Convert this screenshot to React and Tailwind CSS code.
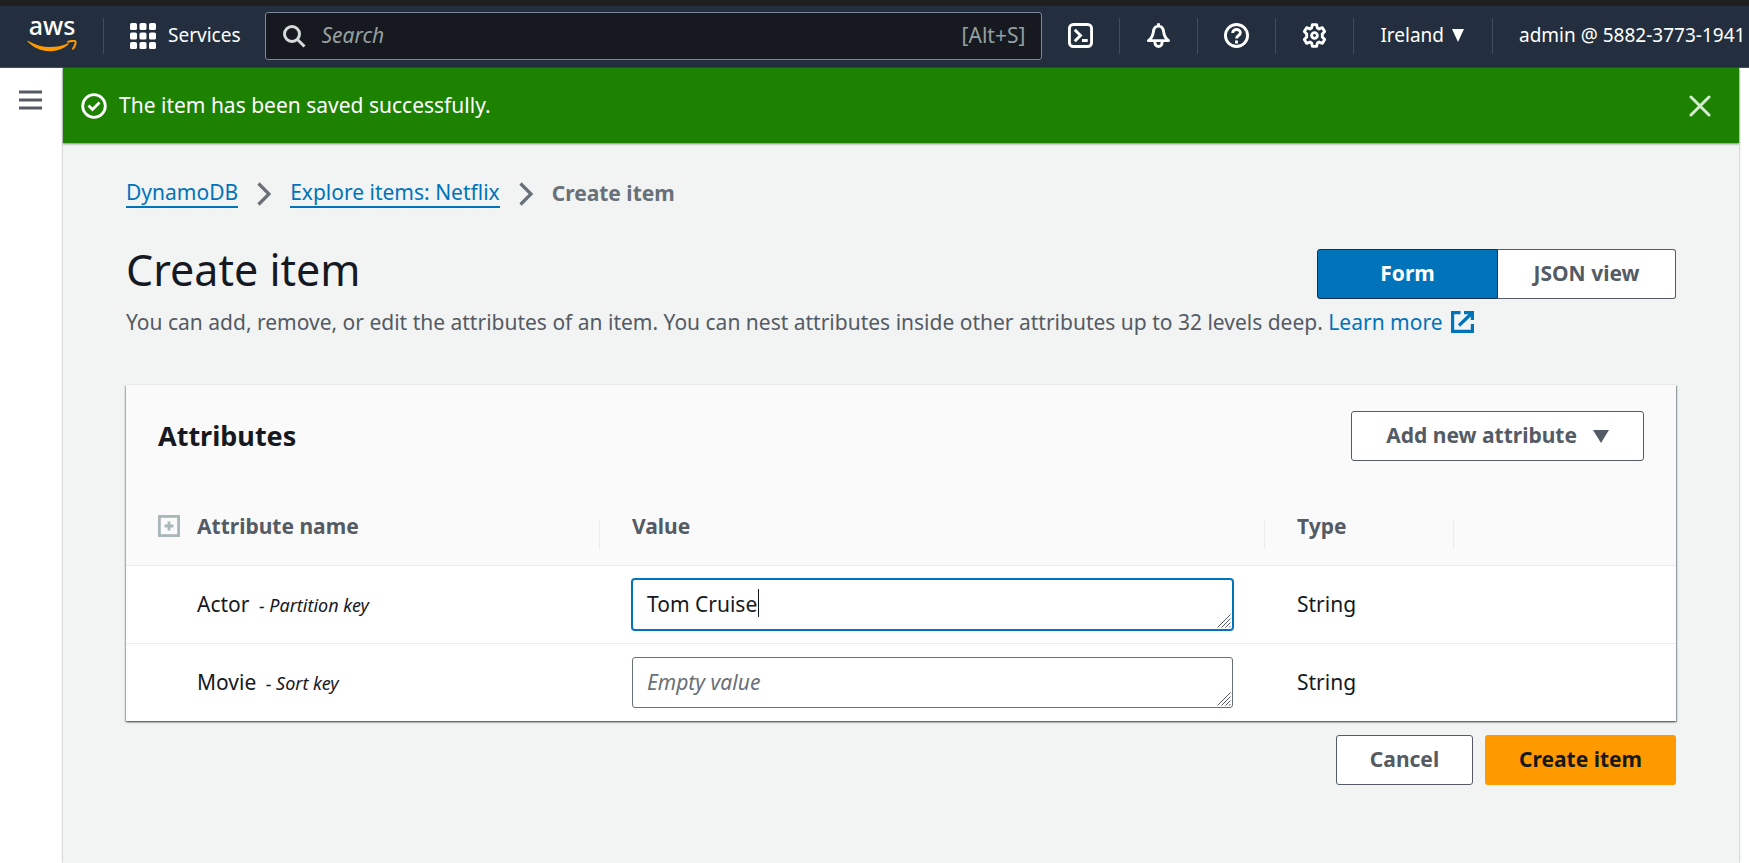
import React from "react";

const outlineButton =
  "flex h-[50px] items-center justify-center rounded-[3px] border border-[#545b64] bg-white text-[21px] font-bold text-[#545b64]";

function AwsLogo() {
  return (
    <a href="#home" aria-label="AWS home" className="flex w-[50px] shrink-0 flex-col items-center text-white">
      <span className="mb-[9px] text-[25px] font-medium leading-3">aws</span>
      <svg viewBox="0 0 50 12" className="h-3 w-[50px]" fill="none" stroke="#ff9900" aria-hidden="true">
        <path d="M.4 1.600C.1 1 .6.500 1.300.900 8 4.800 15 7 23 7c6.500 0 12.500-1.300 17.500-3.600 1-.4 1.700.7.8 1.300C36.500 8.500 30 11.300 22.500 11.300 14 11.300 6 7.500.4 1.600Z" fill="#ff9900" stroke="none" />
        <path d="M41 1.900c3-1.200 6.800-1.300 7.400-.5.600.9-.3 4.600-2.300 7.200" strokeWidth="2" strokeLinecap="round" />
      </svg>
    </a>
  );
}

function Divider() {
  return <span className="h-9 w-px shrink-0 bg-[#414d5c]" />;
}

function GridIcon() {
  return (
    <svg viewBox="0 0 26 26" className="size-[26px]" fill="currentColor" aria-hidden="true">
      {[0, 9.500, 19].map((y) =>
        [0, 9.500, 19].map((x) => <rect key={`${x}-${y}`} x={x} y={y} width="7" height="7" rx="1.600" />)
      )}
    </svg>
  );
}

function ToolIcon({ label, children }) {
  return (
    <button type="button" aria-label={label} className="flex shrink-0 items-center justify-center text-white">
      <svg viewBox="0 0 26 26" className="size-[25px]" fill="none" stroke="currentColor" strokeWidth="3" aria-hidden="true">
        {children}
      </svg>
    </button>
  );
}

function TopBar() {
  return (
    <nav className="flex h-[62px] items-center overflow-hidden border-b border-[#414d5c] bg-[#232f3e] pb-[2px] pl-[27px] text-[20px] text-white">
      <AwsLogo />
      <div className="ml-[26px] flex shrink-0">
        <Divider />
      </div>
      <button type="button" className="ml-[26px] flex shrink-0 items-center gap-3 text-[19px]">
        <GridIcon />
        Services
      </button>
      <label className="ml-6 flex h-12 min-w-0 flex-1 items-center rounded-[3px] border border-[#7d8998] bg-[#16191f] px-4">
        <svg viewBox="0 0 24 24" className="size-6 shrink-0" fill="none" stroke="#d5dbdb" strokeWidth="3" aria-hidden="true">
          <circle cx="10" cy="10" r="7.500" />
          <path d="m15.500 15.500 7 7" />
        </svg>
        <input
          type="search"
          aria-label="Search"
          placeholder="Search"
          className="ml-4 min-w-0 flex-1 bg-transparent text-[21px] italic outline-none placeholder:text-[#95a0a1]"
        />
        <span className="shrink-0 text-[21px] text-[#95a0a1]">[Alt+S]</span>
      </label>
      <div className="ml-[26px] flex shrink-0 items-center gap-[26px]">
        <ToolIcon label="CloudShell">
          <rect x="1.500" y="1.500" width="23" height="23" rx="4" />
          <path d="m7 7 6 6-6 6M14.500 18.200h6" />
        </ToolIcon>
        <Divider />
        <ToolIcon label="Notifications">
          <path strokeLinejoin="round" d="M13 .3v3.200M13 3.200c-3.500 0-4.900 2.300-5.300 5.800-.5 4.300-1.600 6.800-5.200 9.300h21c-3.600-2.500-4.700-5-5.200-9.300-.4-3.500-1.800-5.800-5.300-5.800ZM9.300 18.500v2c0 5.300 7.400 5.300 7.400 0v-2" />
        </ToolIcon>
        <Divider />
        <ToolIcon label="Support">
          <circle cx="13" cy="13" r="11.500" />
          <path d="M9 10.500c0-5 8-5 8-.3 0 3-4 2.500-4 6M13 18.200v3" />
        </ToolIcon>
        <Divider />
        <ToolIcon label="Settings">
          <path
            strokeLinejoin="round"
            d="M10.800 1.700h4.400l.8 3.500 1.700 1 3.500-1.300 2.400 3.900-2.500 2.700v3l2.500 2.700-2.400 3.900-3.500-1.300-1.700 1-.8 3.500h-4.400l-.8-3.500-1.700-1-3.500 1.300-2.400-3.900 2.500-2.700v-3L2.400 8.800l2.400-3.900 3.500 1.300 1.700-1Z"
          />
          <circle cx="13" cy="13" r="3" />
        </ToolIcon>
        <Divider />
        <button type="button" className="flex items-center gap-2 pr-[2px] text-[19px]">
          Ireland
          <svg viewBox="0 0 12 13" className="h-[13px] w-3" fill="currentColor" aria-hidden="true">
            <path d="M0 0h12L6 13Z" />
          </svg>
        </button>
        <Divider />
        <button type="button" className="w-[230px] whitespace-nowrap text-left text-[19px]">
          admin @ 5882-3773-1941
        </button>
      </div>
    </nav>
  );
}

function Banner() {
  return (
    <div role="status" className="flex h-[75px] items-center bg-[#1d8102] pl-[18px] pr-7 text-[21px] text-white shadow-[0_1px_2px_rgba(0,28,36,0.5)]">
      <svg viewBox="0 0 26 26" className="size-[26px] shrink-0" fill="none" stroke="currentColor" strokeWidth="2.800" aria-hidden="true">
        <circle cx="13" cy="13" r="11.300" />
        <path d="m7.500 12.500 4 4 7-7" />
      </svg>
      <p className="ml-3 flex-1">The item has been saved successfully.</p>
      <button type="button" aria-label="Dismiss" className="text-[#d5ecd0]">
        <svg viewBox="0 0 22 22" className="size-[22px]" fill="none" stroke="currentColor" strokeWidth="3" strokeLinecap="round" aria-hidden="true">
          <path d="m2 2 18 18M20 2 2 20" />
        </svg>
      </button>
    </div>
  );
}

function Chevron() {
  return (
    <svg viewBox="0 0 14 24" className="h-6 w-[14px] shrink-0" fill="none" stroke="#687078" strokeWidth="3.200" aria-hidden="true">
      <path d="m1.500 1.500 10.500 10.500-10.500 10.500" />
    </svg>
  );
}

function Breadcrumbs() {
  const link = "border-b-2 border-[#0073bb] text-[#0073bb]";
  return (
    <nav aria-label="Breadcrumbs" className="flex items-center gap-[19px] text-[21px] leading-[27px]">
      <a href="#dynamodb" className={link}>DynamoDB</a>
      <Chevron />
      <a href="#explore" className={link}>Explore items: Netflix</a>
      <Chevron />
      <span className="font-bold text-[#687078]">Create item</span>
    </nav>
  );
}

function ValueField({ id, value, focused }) {
  return (
    <div className="relative">
      <textarea
        id={id}
        rows={1}
        defaultValue={value}
        placeholder="Empty value"
        className={
          "block h-[51px] w-full resize-none overflow-hidden rounded-[3px] bg-white px-[14px] py-[9px] text-[21px] leading-[30px] text-[#16191f] outline-none placeholder:italic placeholder:text-[#687078] " +
          (focused ? "border border-[#0073bb] ring-1 ring-[#0073bb]" : "border border-[#687078]")
        }
      />
      {focused && <span className="absolute left-[126px] top-[10px] h-7 w-px bg-[#16191f]" />}
      <svg viewBox="0 0 14 14" className="pointer-events-none absolute bottom-[2px] right-[2px] size-[14px]" stroke="#545b64" strokeWidth="1" fill="none" aria-hidden="true">
        <path d="M.5 13.500 13.500.5M4.500 13.500l9-9M8.500 13.500l5-5M12 13.500l1.500-1.500" />
      </svg>
    </div>
  );
}

function HeaderCell({ children, divider = true }) {
  return (
    <th scope="col" className="p-0 pb-4 pl-8 text-left font-bold">
      <div className="flex items-end justify-between">
        <span className="flex items-center gap-[17px] pb-[9px] leading-7">{children}</span>
        {divider && <span className="h-[30px] w-px bg-[#eaeded]" />}
      </div>
    </th>
  );
}

const rows = [
  { name: "Actor", role: "Partition key", value: "Tom Cruise", focused: true },
  { name: "Movie", role: "Sort key", value: "", focused: false },
];

function AttributesCard() {
  return (
    <section className="mt-[49px] bg-white shadow-[0_1px_2px_rgba(0,28,36,0.6),1px_1px_1px_rgba(0,28,36,0.25),-1px_1px_1px_rgba(0,28,36,0.15)]">
      <div className="flex items-center justify-between bg-[#fafafa] px-8 pb-[51px] pt-[26px]">
        <h2 className="text-[27px] font-bold leading-8 text-[#16191f]">Attributes</h2>
        <button type="button" className={outlineButton + " gap-4 px-[34px]"}>
          Add new attribute
          <svg viewBox="0 0 16 13" className="h-[13px] w-4" fill="currentColor" aria-hidden="true">
            <path d="M0 0h16L8 13Z" />
          </svg>
        </button>
      </div>
      <table className="w-full table-fixed text-[21px]">
        <colgroup>
          <col className="w-[474px]" />
          <col />
          <col className="w-[189px]" />
          <col className="w-[222px]" />
        </colgroup>
        <thead className="border-b border-[#eaeded] bg-[#fafafa] text-[#545b64]">
          <tr>
            <HeaderCell>
              <svg viewBox="0 0 22 22" className="size-[22px]" fill="none" stroke="#aab7b8" strokeWidth="2.800" aria-hidden="true">
                <rect x="1.400" y="1.400" width="19.200" height="19.200" />
                <path d="M11 6.500v9M6.500 11h9" />
              </svg>
              Attribute name
            </HeaderCell>
            <HeaderCell>Value</HeaderCell>
            <HeaderCell>Type</HeaderCell>
            <HeaderCell divider={false} />
          </tr>
        </thead>
        <tbody className="text-[#16191f]">
          {rows.map((row) => (
            <tr key={row.name} className="border-b border-[#eaeded] last:border-b-0">
              <td className="py-3 pl-[71px]">
                <label htmlFor={row.name.toLowerCase()}>
                  {row.name} <em className="ml-1 text-[18px]">- {row.role}</em>
                </label>
              </td>
              <td className="px-8 py-[13px]">
                <ValueField id={row.name.toLowerCase()} value={row.value} focused={row.focused} />
              </td>
              <td className="pl-8">String</td>
              <td />
            </tr>
          ))}
        </tbody>
      </table>
    </section>
  );
}

export default function App() {
  return (
    <div className="flex min-h-screen flex-col bg-white font-['Noto_Sans','Open_Sans',sans-serif] text-[#16191f]">
      <div className="h-[6px] bg-[#1f1f1f]" />
      <TopBar />
      <div className="flex flex-1">
        <aside className="w-[63px] shrink-0 pl-[19px] pt-[22px]">
          <button type="button" aria-label="Open navigation" className="block text-[#545b64]">
            <svg viewBox="0 0 23 20" className="h-5 w-[23px]" stroke="currentColor" strokeWidth="3" aria-hidden="true">
              <path d="M0 2h23M0 10h23M0 18h23" />
            </svg>
          </button>
        </aside>
        <div className="mr-[10px] min-w-0 flex-1 bg-[#f2f3f3] shadow-[0_0_2px_rgba(0,28,36,0.5)]">
          <Banner />
          <main className="px-[63px] pt-9">
            <Breadcrumbs />
            <div className="mt-[41px] flex items-start justify-between">
              <h1 className="text-[43px] leading-[42px]">Create item</h1>
              <div className="flex">
                <button type="button" aria-pressed="true" className="h-[50px] w-[181px] rounded-l-[3px] border border-[#16324a] bg-[#0073bb] text-[21px] font-bold text-white">
                  Form
                </button>
                <button type="button" aria-pressed="false" className="h-[50px] w-[178px] rounded-r-[3px] border border-l-0 border-[#545b64] bg-white text-[21px] font-bold text-[#545b64]">
                  JSON view
                </button>
              </div>
            </div>
            <p className="mt-[9px] text-[21px] leading-7 text-[#545b64]">
              You can add, remove, or edit the attributes of an item. You can nest attributes inside other attributes up to 32 levels deep.{" "}
              <a href="#learn" className="inline-flex items-center gap-2 text-[#0073bb]">
                Learn more
                <svg viewBox="0 0 23 22" className="h-[22px] w-[23px]" fill="none" stroke="currentColor" strokeWidth="3.200" aria-hidden="true">
                  <path d="M9.500 1.600H1.600v18.800h19.800V13M13 1.600h8.400V9M21 2 8 14.500" />
                </svg>
              </a>
            </p>
            <AttributesCard />
            <div className="flex justify-end gap-3 pt-[14px]">
              <button type="button" className={outlineButton + " w-[137px]"}>Cancel</button>
              <button type="button" className="h-[50px] w-[191px] rounded-[3px] bg-[#ff9900] text-[21px] font-bold text-[#16191f]">
                Create item
              </button>
            </div>
          </main>
        </div>
      </div>
    </div>
  );
}
